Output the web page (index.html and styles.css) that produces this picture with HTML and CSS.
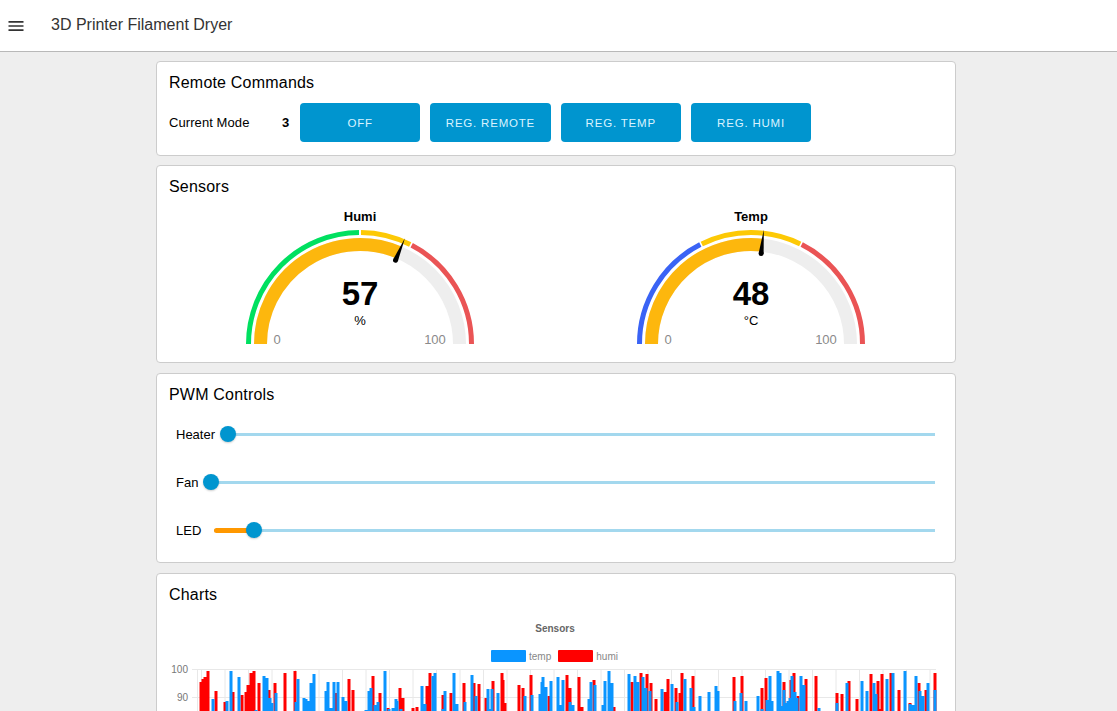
FILE: index.html
```html
<!DOCTYPE html>
<html lang="en">
<head>
<meta charset="utf-8">
<title>3D Printer Filament Dryer</title>
<link rel="stylesheet" href="styles.css">
</head>
<body>
<header class="appbar">
  <svg class="menu-icon" viewBox="0 0 24 24"><path d="M3 18h18v-2H3v2zm0-5h18v-2H3v2zm0-7v2h18V6H3z"/></svg>
  <h1 class="app-title">3D Printer Filament Dryer</h1>
</header>
<main class="content">
  <section class="card card-remote">
    <h2 class="card-title">Remote Commands</h2>
    <div class="mode-row">
      <span class="mode-label">Current Mode</span>
      <span class="mode-value">3</span>
      <div class="mode-buttons">
        <button class="btn">OFF</button>
        <button class="btn">REG. REMOTE</button>
        <button class="btn">REG. TEMP</button>
        <button class="btn">REG. HUMI</button>
      </div>
    </div>
  </section>

  <section class="card card-sensors">
    <h2 class="card-title">Sensors</h2>
    <div class="gauges">
      <svg class="gauge" viewBox="0 0 241 158">
        <text class="g-name" x="120" y="17">Humi</text>
        <path class="g-bg" d="M20.500 140A99.500 99.500 0 0 1 219.500 140"/>
        <path class="g-fill" d="M20.500 140A99.500 99.500 0 0 1 158.900 48.400"/>
        <path class="g-ring g-green" d="M8.500 140A111.500 111.500 0 0 1 119 28.500"/>
        <path class="g-ring g-yellow" d="M121 28.500A111.500 111.500 0 0 1 170.200 40.500"/>
        <path class="g-ring g-red" d="M171.700 41.300A111.500 111.500 0 0 1 231.500 140"/>
        <g transform="rotate(23 120 140)">
          <path class="g-needle" d="M117.500 49L120 25L122.500 49Z"/>
          <circle class="g-needle" cx="120" cy="49" r="2.500"/>
        </g>
        <text class="g-value" x="120" y="101">57</text>
        <text class="g-unit" x="120" y="121">%</text>
        <text class="g-tick" x="37" y="140">0</text>
        <text class="g-tick" x="195" y="140">100</text>
      </svg>
      <svg class="gauge" viewBox="0 0 241 158">
        <text class="g-name" x="120" y="17">Temp</text>
        <path class="g-bg" d="M20.500 140A99.500 99.500 0 0 1 219.500 140"/>
        <path class="g-fill" d="M20.500 140A99.500 99.500 0 0 1 131.100 41.100"/>
        <path class="g-ring g-blue" d="M8.500 140A111.500 111.500 0 0 1 69.300 40.600"/>
        <path class="g-ring g-yellow" d="M70.800 39.900A111.500 111.500 0 0 1 169.200 39.900"/>
        <path class="g-ring g-red" d="M170.700 40.600A111.500 111.500 0 0 1 231.500 140"/>
        <g transform="rotate(6.400 120 140)">
          <path class="g-needle" d="M117.500 49L120 25L122.500 49Z"/>
          <circle class="g-needle" cx="120" cy="49" r="2.500"/>
        </g>
        <text class="g-value" x="120" y="101">48</text>
        <text class="g-unit" x="120" y="121">°C</text>
        <text class="g-tick" x="37" y="140">0</text>
        <text class="g-tick" x="195" y="140">100</text>
      </svg>
    </div>
  </section>

  <section class="card card-pwm">
    <h2 class="card-title">PWM Controls</h2>
    <div class="sliders">
      <div class="slider-row">
        <span class="slider-label">Heater</span>
        <div class="slider-track"><span class="slider-thumb"></span></div>
      </div>
      <div class="slider-row">
        <span class="slider-label">Fan</span>
        <div class="slider-track"><span class="slider-thumb"></span></div>
      </div>
      <div class="slider-row">
        <span class="slider-label">LED</span>
        <div class="slider-track">
          <span class="slider-fill" style="width:5.5%"></span>
          <span class="slider-thumb" style="left:5.5%"></span>
        </div>
      </div>
    </div>
  </section>

  <section class="card card-charts">
    <h2 class="card-title">Charts</h2>
    <div class="chart-title">Sensors</div>
    <div class="chart-legend">
      <span class="legend-swatch swatch-temp"></span><span class="legend-text legend-temp">temp</span>
      <span class="legend-swatch swatch-humi"></span><span class="legend-text">humi</span>
    </div>
    <svg class="plot" viewBox="157 664 798 120">
      <path class="grid" d="M192 669.500H936M192 697.500H936M197.500 669V784M201.500 669V784M225 669V784M248.500 669V784M272 669V784M295.500 669V784M319 669V784M342.500 669V784M366 669V784M389.500 669V784M413 669V784M436.500 669V784M460 669V784M483.500 669V784M507 669V784M530.500 669V784M554 669V784M577.500 669V784M601 669V784M624.500 669V784M648 669V784M671.500 669V784M695 669V784M718.500 669V784M742 669V784M765.500 669V784M789 669V784M812.500 669V784M836 669V784M859.500 669V784M883 669V784M906.500 669V784M930 669V784"/>
      <text class="axis" x="188" y="672.500">100</text>
      <text class="axis" x="188" y="700.500">90</text>
      <path class="bars bars-red" d="M201 682V784M203 679V784M205 677V784M208 671V784M216 691V784M225 702V784M233 692V784M242 695V784M246 692V784M248 685V784M251 673V784M254 671V784M259 683V784M269 690V784M275 683V784M285 673V784M295 671V784M336 693V784M349 679V784M353 690V784M373 676V784M380 693V784M388 708V784M400 688V784M403 698V784M413 708V784M417 707V784M427 686V784M430 673V784M443 695V784M451 693V784M464 683V784M474 683V784M479 684V784M486 698V784M493 681V784M502 673V784M503 680V784M505 703V784M519 685V784M523 688V784M531 675V784M549 696V784M567 675V784M570 688V784M579 677V784M582 707V784M594 680V784M614 707V784M632 682V784M641 673V784M647 674V784M651 683V784M656 699V784M665 692V784M668 679V784M676 688V784M680 693V784M682 673V784M693 676V784M734 677V784M742 676V784M762 688V784M766 678V784M784 682V784M791 680V784M794 673V784M798 696V784M806 679V784M816 676V784M837 693V784M842 694V784M849 681V784M857 699V784M871 674V784M878 681V784M880 709V784M882 674V784M891 673V784M899 690V784M910 703V784M919 683V784M926 690V784M935 673V784"/>
      <path class="bars bars-blue" d="M213 699V784M227 701V784M231 671V784M239 677V784M256 710V784M264 676V784M267 678V784M270 698V784M272 703V784M276 693V784M296 702V784M298 679V784M304 698V784M306 699V784M309 701V784M311 683V784M314 674V784M326 691V784M328 682V784M331 708V784M334 682V784M338 682V784M343 697V784M346 701V784M366 710V784M369 691V784M371 688V784M375 705V784M378 702V784M385 671V784M389 709V784M393 708V784M396 699V784M397 701V784M401 709V784M422 686V784M425 704V784M433 676V784M435 673V784M443 709V784M445 691V784M454 673V784M457 704V784M465 702V784M472 675V784M476 696V784M488 689V784M490 709V784M492 689V784M498 693V784M525 696V784M532 695V784M540 694V784M542 682V784M543 677V784M546 687V784M551 681V784M558 677V784M560 705V784M563 680V784M570 702V784M573 705V784M589 699V784M591 682V784M595 685V784M603 705V784M605 681V784M609 671V784M612 683V784M629 674V784M635 676V784M638 682V784M643 677V784M646 688V784M650 691V784M662 689V784M672 684V784M677 702V784M685 679V784M691 688V784M694 707V784M700 696V784M709 692V784M716 686V784M718 691V784M735 701V784M741 693V784M746 701V784M758 696V784M762 709V784M767 700V784M770 676V784M772 701V784M778 671V784M780 673V784M782 706V784M784 690V784M786 703V784M788 701V784M790 698V784M792 676V784M795 692V784M797 698V784M801 676V784M804 685V784M819 708V784M837 703V784M847 683V784M862 681V784M867 691V784M874 683V784M876 694V784M887 679V784M893 673V784M905 671V784M910 704V784M913 705V784M916 676V784M920 691V784M923 696V784M928 683V784M935 690V784"/>
    </svg>
  </section>
</main>
</body>
</html>
```

FILE: styles.css
```css
* { box-sizing: border-box; }
html, body { margin: 0; height: 100%; overflow: hidden; }
body {
  background: #eeeeee;
  font-family: "Liberation Sans", Arial, sans-serif;
  color: #000;
}
.appbar {
  display: flex;
  align-items: center;
  height: 52px;
  padding: 0 0 2px 6px;
  background: #fff;
  border-bottom: 1px solid #b8b8b8;
}
.menu-icon { width: 20px; height: 20px; fill: #333; margin-top: 2px; }
.app-title {
  margin: 0 0 0 25px;
  font-size: 16px;
  font-weight: 400;
  color: #333;
}
.content {
  display: flex;
  flex-direction: column;
  gap: 9px;
  width: 800px;
  margin: 9px 0 0 156px;
}
.card {
  flex: none;
  background: #fff;
  border: 1px solid #ccc;
  border-radius: 4px;
}
.card-remote { height: 95px; }
.card-sensors { height: 198px; }
.card-pwm { height: 190px; margin-top: 1px; }
.card-charts { margin-top: 1px; }
.card-title {
  margin: 0;
  padding: 11px 13px 0 12px;
  font-size: 16px;
  line-height: 20px;
  font-weight: 400;
  letter-spacing: .2px;
}
.mode-row {
  display: flex;
  align-items: center;
  margin-top: 10px;
  padding-left: 12px;
  font-size: 13px;
}
.mode-label { width: 113px; letter-spacing: .08px; }
.mode-value { width: 18px; font-weight: 700; }
.mode-buttons {
  display: grid;
  grid-template-columns: repeat(4, 120.3px);
  gap: 10px;
}
.btn {
  height: 39px;
  padding: 0;
  border: 0;
  border-radius: 4px;
  background: #0095cf;
  color: #d9f3ff;
  font: 11.5px "Liberation Sans", Arial, sans-serif;
  letter-spacing: .8px;
}
.gauges {
  display: grid;
  grid-template-columns: 391px 391px;
  padding: 0 8px;
  margin-top: 7px;
  justify-items: center;
}
.gauge { display: block; width: 241px; height: 158px; }
.g-name { font-size: 13px; font-weight: 700; text-anchor: middle; }
.g-bg, .g-fill, .g-ring { fill: none; }
.g-bg { stroke: #eeeeee; stroke-width: 13px; }
.g-fill { stroke: #fdb70d; stroke-width: 13px; }
.g-ring { stroke-width: 5px; }
.g-green { stroke: #00e060; }
.g-yellow { stroke: #fdc905; }
.g-red { stroke: #ea5455; }
.g-blue { stroke: #3a63f5; }
.g-needle { fill: #000; }
.g-value { font-size: 33px; font-weight: 700; text-anchor: middle; }
.g-unit { font-size: 13px; text-anchor: middle; }
.g-tick { font-size: 13px; fill: #8a8a8a; text-anchor: middle; }
.sliders {
  display: flex;
  flex-direction: column;
  gap: 32px;
  padding: 21px 20px 0 19px;
}
.slider-row {
  display: flex;
  align-items: center;
  gap: 13px;
  height: 16px;
  font-size: 13px;
}
.slider-track {
  position: relative;
  flex: 1;
  height: 3px;
  background: #a3d8ee;
}
.slider-fill {
  position: absolute;
  left: 0;
  top: -1px;
  height: 5px;
  background: #ff9800;
  border-radius: 3px 0 0 3px;
}
.slider-thumb {
  position: absolute;
  left: 0;
  top: 50%;
  width: 16px;
  height: 16px;
  margin: -8px 0 0 -8px;
  border-radius: 50%;
  background: #0095cf;
  box-shadow: 0 1px 2px rgba(0, 0, 0, .2);
}
.chart-title {
  margin-top: 18px;
  padding-right: 2px;
  text-align: center;
  font-size: 10px;
  line-height: 12px;
  font-weight: 700;
  color: #666;
}
.chart-legend {
  display: flex;
  justify-content: center;
  align-items: center;
  margin-top: 15px;
  padding-right: 3px;
  height: 12px;
  font-size: 10px;
  color: #888;
}
.legend-swatch { width: 35px; height: 12px; border-radius: 1px; margin-right: 3px; }
.swatch-temp { background: #0a95ff; }
.swatch-humi { background: #ff0000; }
.legend-temp { margin-right: 7px; }
.plot { display: block; width: 798px; height: 120px; margin-top: 2px; }
.grid { fill: none; stroke: #e8e8e8; stroke-width: 1px; }
.axis { font-size: 10px; fill: #777; text-anchor: end; }
.bars { fill: none; stroke-width: 3px; }
.bars-red { stroke: #ff0000; }
.bars-blue { stroke: #0a95ff; }
```
